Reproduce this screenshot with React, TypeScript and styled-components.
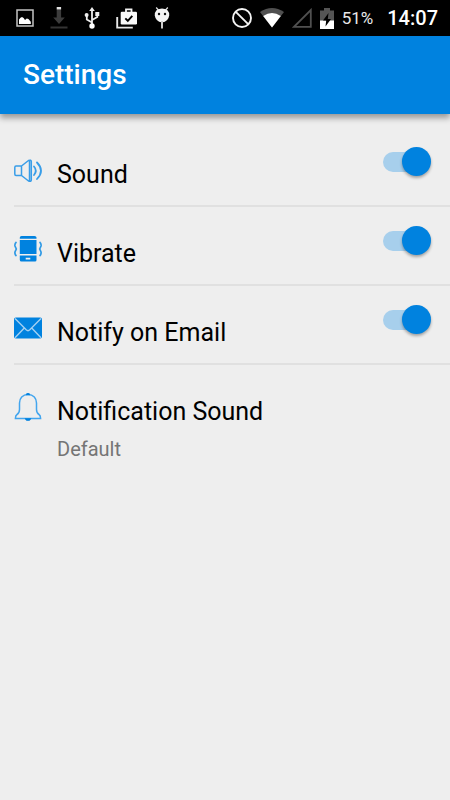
import React, { useState } from "react";
import styled, { createGlobalStyle } from "styled-components";

const BLUE = "#0082df";

const GlobalStyle = createGlobalStyle`
  *, *::before, *::after { box-sizing: border-box; }
  body {
    margin: 0;
    background: #eeeeee;
    font-family: Roboto, "Noto Sans", sans-serif;
    color: #000000;
  }
`;

const Screen = styled.div`
  min-height: 100vh;
  background: #eeeeee;
`;

const StatusBar = styled.div`
  display: flex;
  align-items: center;
  justify-content: space-between;
  height: 36px;
  padding: 0 12px 0 16px;
  background: #000000;
  color: #ffffff;
`;

const StatusGroup = styled.div<{ $gap: number }>`
  display: flex;
  align-items: center;
  gap: ${(p) => p.$gap}px;

  svg {
    display: block;
    flex: none;
  }
`;

const BatteryLevel = styled.span`
  font-size: 17px;
  line-height: 20px;
  color: #e8e8e8;
`;

const Clock = styled.time`
  margin-left: 6px;
  font-size: 20px;
  font-weight: 500;
  line-height: 24px;
`;

const AppBar = styled.header`
  position: relative;
  display: flex;
  align-items: center;
  height: 78px;
  padding: 0 23px;
  background: ${BLUE};
  box-shadow: 0 4px 6px rgba(0, 0, 0, 0.36);
`;

const Title = styled.h1`
  margin: 0;
  color: #ffffff;
  font-size: 28px;
  font-weight: 500;
  line-height: 32px;
`;

const SettingsList = styled.main`
  padding: 14px 0 0 14px;
`;

const rowLayout = `
  display: grid;
  grid-template-columns: 28px 1fr auto;
  column-gap: 15px;
  align-items: start;
`;

const ToggleRow = styled.label`
  ${rowLayout}
  height: 79px;
  padding: 19px 19px 0 0;
  border-bottom: 2px solid #e0e0e0;
  cursor: pointer;
`;

const LinkRow = styled.button`
  ${rowLayout}
  width: 100%;
  padding: 19px 19px 19px 0;
  border: 0;
  background: none;
  color: inherit;
  font: inherit;
  text-align: left;
  cursor: pointer;
`;

const IconSlot = styled.span`
  display: block;
  padding-top: 9px;

  svg {
    display: block;
  }
`;

const Label = styled.span`
  display: block;
  padding-top: 13px;
  font-size: 25px;
  line-height: 30px;
`;

const Summary = styled.span`
  display: block;
  padding-top: 10px;
  color: #757575;
  font-size: 20px;
  line-height: 24px;
`;

const Switch = styled.input`
  appearance: none;
  display: grid;
  align-items: center;
  width: 48px;
  height: 29px;
  margin: 0;
  cursor: pointer;

  &::before,
  &::after {
    content: "";
    grid-area: 1 / 1;
  }

  &::before {
    width: 44px;
    height: 20px;
    border-radius: 10px;
    background: #b9b9b9;
  }

  &::after {
    width: 29px;
    height: 29px;
    border-radius: 50%;
    background: #fafafa;
    box-shadow: 0 2px 3px rgba(0, 0, 0, 0.32);
  }

  &:checked::before {
    background: #a7cfec;
  }

  &:checked::after {
    justify-self: end;
    background: ${BLUE};
  }
`;

const PictureIcon = () => (
  <svg width="18" height="18" viewBox="0 0 18 18" aria-hidden="true">
    <rect x="1" y="1" width="16" height="16" fill="none" stroke="#c4c4c4" strokeWidth="1.5" />
    <path d="M3 15v-4.5l1.5-1.8 1.5-.7 1.6 1 1.4 2 1.8-1.5 1.6.6 2.4 2.6V15z" fill="#fff" />
  </svg>
);

const DownloadIcon = () => (
  <svg width="18" height="22" viewBox="0 0 18 22" aria-hidden="true">
    <path d="M6.7 2h4.4v8.5h3.7L9 17l-5.8-6.5h3.5z" fill="#3c3c3c" />
    <path d="M6.7 0h4.4v2.4H6.7z" fill="#e2e2e2" />
    <path d="M.5 19.5h17v2H.5z" fill="#343434" />
  </svg>
);

const UsbIcon = () => (
  <svg width="16" height="22" viewBox="0 0 16 22" aria-hidden="true">
    <path d="M8 3v15M8 15.5l-5.2-3V9M8 13l5.3-3V7" fill="none" stroke="#eee" strokeWidth="1.8" />
    <path d="M8 0l2.8 4H5.2zM11.3 5h4v4h-4z" fill="#eee" />
    <circle cx="2.6" cy="8" r="2" fill="#eee" />
    <circle cx="8" cy="19" r="2.7" fill="#fff" />
  </svg>
);

const ShopIcon = () => (
  <svg width="22" height="21" viewBox="0 0 22 21" aria-hidden="true">
    <path d="M1.2 9v10.6h15.6" fill="none" stroke="#e8e8e8" strokeWidth="1.9" />
    <path d="M10 4V1.4h5.5V4" fill="none" stroke="#f4f4f4" strokeWidth="1.8" />
    <rect x="4.7" y="3.7" width="16.3" height="12.8" rx="1.2" fill="#fafafa" />
    <path d="M9.3 10.4l2.5 2.4 4.5-5" fill="none" stroke="#000" strokeWidth="1.9" />
  </svg>
);

const DroidIcon = () => (
  <svg width="16" height="22" viewBox="1 0 16 22" aria-hidden="true">
    <path d="M3.2.5l2.6 3M14.8.5l-2.600 3" stroke="#ddd" strokeWidth="1.300" />
    <path d="M3.500 3.200Q9 0 14.500 3.200q2 2.200 1.700 5.200-.8 6-7.200 7-6.400-1-7.200-7Q1.500 5.400 3.500 3.200z" fill="#f4f4f4" />
    <path d="M8 14h2v7.500H8z" fill="#ccc" />
    <circle cx="6" cy="7" r="1.200" fill="#111" />
    <circle cx="12" cy="7" r="1.200" fill="#111" />
  </svg>
);

const BlockedIcon = () => (
  <svg width="20" height="22" viewBox="1 0 20 22" aria-hidden="true">
    <circle cx="11" cy="11" r="9" fill="none" stroke="#f4f4f4" strokeWidth="1.900" />
    <path d="M4.800 4.800l12.400 12.400" stroke="#f4f4f4" strokeWidth="1.900" />
  </svg>
);

const WifiIcon = () => (
  <svg width="24" height="20" viewBox="0 0 24 20" aria-hidden="true">
    <path d="M0 4Q12-4 24 4L12 19.500z" fill="#505050" />
    <path d="M3.200 8Q12 2 20.800 8L12 19.500z" fill="#fff" />
  </svg>
);

const SignalIcon = () => (
  <svg width="20" height="20" viewBox="0 0 20 20" aria-hidden="true">
    <path d="M2 18.800H18.800V2z" fill="none" stroke="#505050" strokeWidth="1.800" />
  </svg>
);

const BatteryIcon = () => (
  <svg width="14" height="21" viewBox="0 0 14 21" aria-hidden="true">
    <path d="M4 0h6v2.500h4V21H0V2.500h4z" fill="#555" />
    <path d="M0 12.500h14V21H0z" fill="#fff" />
    <path d="M8.500 5L3 12.500h3.200L5.500 18.500l5.500-7.500H7.800z" fill="#000" />
  </svg>
);

const SpeakerIcon = () => (
  <svg width="28" height="28" viewBox="0 -1 28 28" aria-hidden="true">
    <g fill="none" stroke="#389de8" strokeWidth="1.500" strokeLinejoin="round" strokeLinecap="round">
      <path d="M2 9H7.500V18.500H2Q.8 18.500.8 17V10.500Q.8 9 2 9zM7.500 9L14.500 3.500Q17.300 2.500 17.300 4.500V23Q17.300 25 14.500 24L7.500 18.500M15.500 3.500V24" />
      <path d="M20 9.500q3.600 4.200 0 8.500" strokeWidth="1.800" />
      <path d="M23 5.500q8 8.200 0 16.500" strokeWidth="1.800" />
    </g>
  </svg>
);

const VibrateIcon = () => (
  <svg width="28" height="28" viewBox="0 0 28 28" aria-hidden="true">
    <path d="M7.500 1h13Q22.500 1 22.500 2.500V3.700H5.800V2.500Q5.800 1 7.500 1zM5.800 5h16.700v14H5.800z" fill={BLUE} />
    <path d="M5.800 20.500h16.700v4.500q0 1.500-1.500 1.500h-13.500Q5.800 26.500 5.800 25zM11.700 22.700v1.800h4.600v-1.800z" fill={BLUE} fillRule="evenodd" />
    <path d="M2.500 7Q.5 8.500 1 11l1.300 3L1 17Q.5 19.500 2.500 21M25.500 7q2 1.500 1.500 4l-1.300 3 1.300 3q.5 2.500-1.500 4" fill="none" stroke="#309ae5" strokeWidth="1.700" />
  </svg>
);

const MailIcon = () => (
  <svg width="28" height="28" viewBox="0 0 28 28" aria-hidden="true">
    <rect x="0" y="3.500" width="28" height="21" rx="1.800" fill={BLUE} />
    <path d="M1 4.500L12.200 15.800Q14 17.500 15.800 15.800L27 4.500M1 23.800L10.300 14M27 23.800L17.700 14" fill="none" stroke="#a3d0f2" strokeWidth="1.400" />
  </svg>
);

const BellIcon = () => (
  <svg width="28" height="28" viewBox="0 0 28 28" aria-hidden="true">
    <path d="M14 1.500C8.500 1.500 5.500 5.500 5.500 10V16.500Q5.500 20 3 21.500 1.400 22.500 1.400 25.500H26.600Q26.600 22.500 25 21.500 22.500 20 22.500 16.500V10C22.500 5.500 19.500 1.500 14 1.500z" fill="none" stroke="#42a5ee" strokeWidth="1.500" />
    <path d="M12.200 1.900a1.800 1.800 0 0 1 3.600 0zM11 25.500h6q-.5 2.200-3 2.200t-3-2.200z" fill={BLUE} stroke={BLUE} strokeWidth=".5" />
  </svg>
);

interface ToggleSettingProps {
  icon: React.ReactNode;
  label: string;
}

function ToggleSetting({ icon, label }: ToggleSettingProps) {
  const [enabled, setEnabled] = useState(true);
  return (
    <ToggleRow>
      <IconSlot>{icon}</IconSlot>
      <Label>{label}</Label>
      <Switch
        type="checkbox"
        role="switch"
        checked={enabled}
        onChange={(event) => setEnabled(event.target.checked)}
      />
    </ToggleRow>
  );
}

export default function App() {
  return (
    <Screen>
      <GlobalStyle />
      <StatusBar>
        <StatusGroup $gap={16}>
          <PictureIcon />
          <DownloadIcon />
          <UsbIcon />
          <ShopIcon />
          <DroidIcon />
        </StatusGroup>
        <StatusGroup $gap={8}>
          <BlockedIcon />
          <WifiIcon />
          <SignalIcon />
          <BatteryIcon />
          <BatteryLevel>51%</BatteryLevel>
          <Clock>14:07</Clock>
        </StatusGroup>
      </StatusBar>
      <AppBar>
        <Title>Settings</Title>
      </AppBar>
      <SettingsList>
        <ToggleSetting icon={<SpeakerIcon />} label="Sound" />
        <ToggleSetting icon={<VibrateIcon />} label="Vibrate" />
        <ToggleSetting icon={<MailIcon />} label="Notify on Email" />
        <LinkRow type="button">
          <IconSlot>
            <BellIcon />
          </IconSlot>
          <span>
            <Label>Notification Sound</Label>
            <Summary>Default</Summary>
          </span>
        </LinkRow>
      </SettingsList>
    </Screen>
  );
}
